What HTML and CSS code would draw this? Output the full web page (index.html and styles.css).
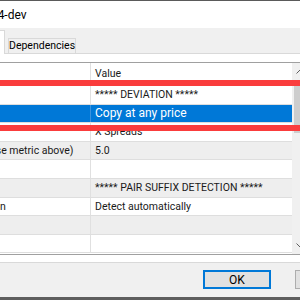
FILE: index.html
```html
<!DOCTYPE html>
<html lang="en">

<head>
    <meta charset="UTF-8">
    <title>Expert properties</title>
    <link rel="stylesheet" href="styles.css">
</head>

<body>

    <div class="window">
        <div class="titlebar">
            <span class="title">Trade Copier v1.4-dev</span>
        </div>

        <div class="tabs">
            <div class="tab tab-common">Common</div>
            <div class="tab tab-inputs active">Inputs</div>
            <div class="tab tab-deps">Dependencies</div>
        </div>

        <div class="page">
            <div class="listview">
                <div class="grid">
                    <div class="head">
                        <div class="cell name">Variable</div>
                        <div class="cell value">Value</div>
                    </div>
                    <div class="row">
                        <div class="cell name"></div>
                        <div class="cell value">***** DEVIATION *****</div>
                    </div>
                    <div class="row selected">
                        <div class="cell name">Mode</div>
                        <div class="cell value editing">Copy at any price</div>
                    </div>
                    <div class="row">
                        <div class="cell name">Metric</div>
                        <div class="cell value">X Spreads</div>
                    </div>
                    <div class="row">
                        <div class="cell name">Deviation value (use metric above)</div>
                        <div class="cell value">5.0</div>
                    </div>
                    <div class="row">
                        <div class="cell name"></div>
                        <div class="cell value"></div>
                    </div>
                    <div class="row">
                        <div class="cell name"></div>
                        <div class="cell value">***** PAIR SUFFIX DETECTION *****</div>
                    </div>
                    <div class="row">
                        <div class="cell name">Pair suffix detection</div>
                        <div class="cell value">Detect automatically</div>
                    </div>
                    <div class="row">
                        <div class="cell name"></div>
                        <div class="cell value"></div>
                    </div>
                    <div class="row">
                        <div class="cell name"></div>
                        <div class="cell value"></div>
                    </div>
                </div>

                <div class="scrollbar">
                    <div class="arrow">
                        <svg width="9" height="5" viewBox="0 0 9 5"><path d="M0.5 4.5 L4.5 0.5 L8.5 4.5" fill="none" stroke="#606060" stroke-width="1"/></svg>
                    </div>
                    <div class="track">
                        <div class="thumb"></div>
                    </div>
                    <div class="arrow">
                        <svg width="9" height="5" viewBox="0 0 9 5"><path d="M0.5 0.5 L4.5 4.5 L8.5 0.5" fill="none" stroke="#606060" stroke-width="1"/></svg>
                    </div>
                </div>
            </div>

            <div class="side">
                <button class="btn">Load</button>
                <button class="btn">Save</button>
            </div>
        </div>

        <div class="buttons">
            <button class="btn default">OK</button>
            <button class="btn">Cancel</button>
            <button class="btn">Reset</button>
        </div>
    </div>

    <!-- annotation drawn over the screenshot -->
    <div class="mark"></div>

</body>

</html>
```

FILE: styles.css
```css
* {
    box-sizing: border-box;
}

html, body {
    margin: 0;
    padding: 0;
}

body {
    width: 300px;
    height: 300px;
    overflow: hidden;
    position: relative;
    background-color: #5e5e5e;
    font-family: Roboto, 'Liberation Sans', sans-serif;
    font-size: 10.5px;
    color: #1a1a1a;
}

.window {
    margin-left: -109px;
    width: 572px;
    height: 297px;
    background-color: #f0f0f0;
    border-top: 1px solid #5a5a5a;
}

.titlebar {
    height: 27px;
    background-color: #fff;
    display: flex;
    align-items: center;
    padding-left: 20px;
}

.title {
    font-size: 12px;
    color: #000;
}

.tabs {
    height: 25px;
    display: flex;
    align-items: flex-end;
    padding-left: 20px;
}

.tab {
    height: 15px;
    border: 1px solid #d9d9d9;
    border-bottom: none;
    background-color: #f0f0f0;
    line-height: 13px;
    text-align: center;
    color: #000;
}

.tab-common {
    width: 54px;
}

.tab-inputs {
    width: 40px;
}

.tab-deps {
    width: 68px;
    margin-left: 3px;
}

.tab.active {
    height: 24px;
    background-color: #fff;
    margin-bottom: -1px;
    position: relative;
    z-index: 1;
}

.page {
    height: 210px;
    margin: 0 8px;
    padding: 8px;
    background-color: #fff;
    border: 1px solid #d9d9d9;
    display: flex;
    gap: 8px;
}

.listview {
    flex: none;
    width: 402px;
    height: 193px;
    border: 1px solid #a0a0a0;
    display: flex;
}

.grid {
    flex: 1;
}

.head,
.row {
    display: grid;
    grid-template-columns: 182px 1fr;
}

.head {
    height: 23px;
    line-height: 22px;
}

.row {
    height: 18.6px;
    line-height: 17.6px;
    border-bottom: 1px solid #dedede;
}

.row:nth-child(odd) {
    background-color: #eeeeee;
}

.cell {
    white-space: nowrap;
    overflow: hidden;
}

.cell.name {
    padding-left: 4px;
    border-right: 1px solid #e0e0e0;
}

.cell.value {
    padding-left: 4px;
}

.cell.editing {
    font-size: 12px;
}

.row.selected {
    background-color: #0078d7;
    color: #fff;
}

.row.selected .cell.name {
    border-right-color: #3b93df;
}

.scrollbar {
    width: 17px;
    flex: none;
    display: flex;
    flex-direction: column;
    background-color: #f0f0f0;
}

.arrow {
    height: 17px;
    display: flex;
    align-items: center;
    justify-content: center;
}

.track {
    flex: 1;
    padding: 6px 2px 0;
}

.thumb {
    height: 47px;
    background-color: #cdcdcd;
}

.side {
    display: flex;
    flex-direction: column;
    gap: 6px;
}

.btn {
    width: 68px;
    height: 19px;
    padding: 0;
    font-family: inherit;
    font-size: 12px;
    color: #000;
    background-color: #e1e1e1;
    border: 1px solid #adadad;
}

.btn.default {
    border: 2px solid #0078d7;
}

.buttons {
    display: flex;
    justify-content: flex-end;
    gap: 24px;
    padding: 7px 8px 0;
}

.mark {
    position: absolute;
    top: 80px;
    left: -20px;
    right: -20px;
    height: 51px;
    border-top: 6px solid #fa3c3c;
    border-bottom: 6px solid #fa3c3c;
}
```
